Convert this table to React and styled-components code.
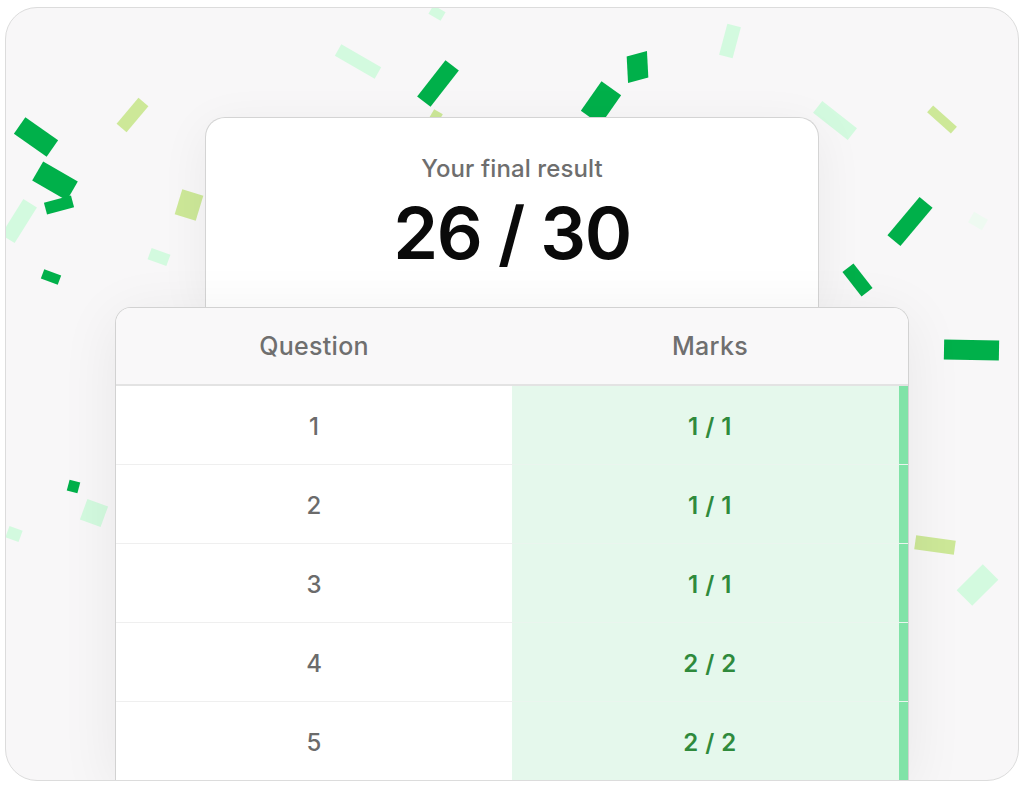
import React from 'react';
import styled, { createGlobalStyle } from 'styled-components';

const GlobalStyle = createGlobalStyle`
  html, body {
    margin: 0;
    padding: 0;
    background: #ffffff;
  }
  body {
    font-family: "Inter", "Open Sans", sans-serif;
  }
`;

const Page = styled.div`
  width: 1024px;
  height: 787px;
  padding: 7px 5px 6px 5px;
  box-sizing: border-box;
`;

const Frame = styled.div`
  position: relative;
  height: 100%;
  box-sizing: border-box;
  border: 1.5px solid #dcdcdc;
  border-radius: 32px;
  background: #f8f7f8;
  overflow: hidden;
  display: flex;
  flex-direction: column;
  align-items: center;
  padding-top: 109px;
`;

const Confetti = styled.span`
  position: absolute;
  left: ${(p) => p.x}px;
  top: ${(p) => p.y}px;
  width: ${(p) => p.w}px;
  height: ${(p) => p.h}px;
  margin-left: ${(p) => -p.w / 2}px;
  margin-top: ${(p) => -p.h / 2}px;
  background: ${(p) => p.c};
  transform: rotate(${(p) => p.r}deg) skewX(${(p) => p.s || 0}deg);
  z-index: 0;
`;

const ScoreCard = styled.div`
  position: relative;
  z-index: 1;
  width: 614px;
  height: 190px;
  box-sizing: border-box;
  background: #ffffff;
  border: 1.5px solid #d4d4d4;
  border-bottom: none;
  border-radius: 20px 20px 0 0;
  box-shadow: 0 10px 50px rgba(0, 0, 0, 0.06);
  display: flex;
  flex-direction: column;
  align-items: center;
  padding-top: 37px;
`;

const Label = styled.div`
  font-size: 24px;
  line-height: 28px;
  font-weight: 500;
  color: #6e6e6e;
  letter-spacing: 0.1px;
`;

const Score = styled.div`
  margin-top: 8px;
  font-size: 72px;
  line-height: 84px;
  font-weight: 600;
  color: #0a0a0a;
  letter-spacing: -1.5px;
`;

const Table = styled.div`
  position: relative;
  z-index: 2;
  width: 794px;
  flex: 1;
  box-sizing: border-box;
  background: #ffffff;
  border: 1.5px solid #d2d2d2;
  border-bottom: none;
  border-radius: 16px 16px 0 0;
  box-shadow: 0 10px 60px rgba(0, 0, 0, 0.07);
  overflow: hidden;
  display: grid;
  grid-template-columns: 1fr 1fr;
  grid-auto-rows: 79px;
  grid-template-rows: 78px;
`;

const HeadCell = styled.div`
  display: flex;
  align-items: center;
  justify-content: center;
  background: #f9f8f9;
  border-bottom: 2px solid #e3e3e3;
  font-size: 25px;
  font-weight: 500;
  letter-spacing: 0.3px;
  color: #6f6f6f;
`;

const Cell = styled.div`
  display: flex;
  align-items: center;
  justify-content: center;
  padding-top: 3px;
  box-sizing: border-box;
  font-size: 24px;
  color: ${(p) => (p.mark ? '#2f8a3c' : '#6b6b6b')};
  background: ${(p) => (p.mark ? '#e5f8ec' : '#ffffff')};
  border-bottom: 1.5px solid ${(p) => (p.mark ? '#eaf5ee' : '#efefef')};
  box-shadow: ${(p) => (p.mark ? 'inset -9px 0 0 #80e3a7' : 'none')};
  font-weight: ${(p) => (p.mark ? 600 : 500)};
  letter-spacing: ${(p) => (p.mark ? '0.5px' : '0')};
`;

const DARK = '#00b04a';
const MINT = '#d3fadf';
const LIME = '#cde898';

const confetti = [
  { x: 352, y: 53, w: 46, h: 13, r: 30, c: MINT },
  { x: 431, y: 5, w: 14, h: 10, r: 30, c: MINT },
  { x: 432, y: 75, w: 46, h: 17, r: -52, c: DARK },
  { x: 595, y: 95, w: 36, h: 24, r: -55, c: DARK },
  { x: 631, y: 59, w: 21, h: 26, r: -15, s: -12, c: DARK },
  { x: 724, y: 33, w: 14, h: 32, r: 15, c: MINT },
  { x: 829, y: 112, w: 44, h: 15, r: 38, c: MINT },
  { x: 936, y: 111, w: 32, h: 9, r: 42, c: LIME },
  { x: 904, y: 213, w: 50, h: 17, r: -50, c: DARK },
  { x: 851, y: 272, w: 31, h: 14, r: 52, c: DARK },
  { x: 972, y: 213, w: 16, h: 12, r: 30, c: '#eefaf1' },
  { x: 965, y: 342, w: 55, h: 20, r: 1, c: DARK },
  { x: 929, y: 537, w: 40, h: 14, r: 8, c: LIME },
  { x: 971, y: 577, w: 37, h: 22, r: -45, c: MINT },
  { x: 30, y: 129, w: 40, h: 20, r: 35, c: DARK },
  { x: 49, y: 173, w: 40, h: 22, r: 30, c: DARK },
  { x: 53, y: 197, w: 28, h: 12, r: -15, c: DARK },
  { x: 13, y: 213, w: 16, h: 42, r: 32, c: MINT },
  { x: 126, y: 107, w: 13, h: 34, r: 40, c: LIME },
  { x: 183, y: 197, w: 22, h: 26, r: 17, c: LIME },
  { x: 153, y: 249, w: 20, h: 12, r: 20, c: MINT },
  { x: 45, y: 269, w: 18, h: 10, r: 20, c: DARK },
  { x: 67, y: 478, w: 11, h: 11, r: 15, c: DARK },
  { x: 88, y: 505, w: 22, h: 22, r: 20, c: MINT },
  { x: 8, y: 526, w: 14, h: 12, r: 20, c: MINT },
  { x: 430, y: 108, w: 10, h: 10, r: 30, c: LIME },
];

const rows = [
  ['1', '1 / 1'],
  ['2', '1 / 1'],
  ['3', '1 / 1'],
  ['4', '2 / 2'],
  ['5', '2 / 2'],
];

export default function App() {
  return (
    <Page>
      <GlobalStyle />
      <Frame>
        {confetti.map((p, i) => (
          <Confetti key={i} {...p} />
        ))}
        <ScoreCard>
          <Label>Your final result</Label>
          <Score>26 / 30</Score>
        </ScoreCard>
        <Table>
          <HeadCell>Question</HeadCell>
          <HeadCell>Marks</HeadCell>
          {rows.map(([q, m]) => (
            <React.Fragment key={q}>
              <Cell>{q}</Cell>
              <Cell mark>{m}</Cell>
            </React.Fragment>
          ))}
        </Table>
      </Frame>
    </Page>
  );
}
